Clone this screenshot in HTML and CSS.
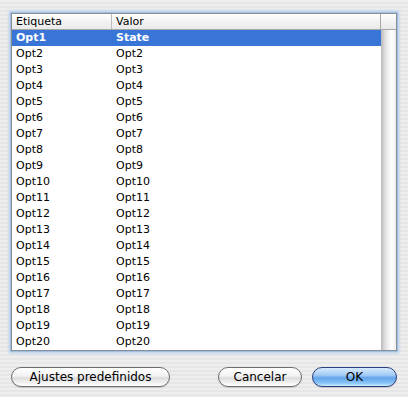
FILE: index.html
```html
<!DOCTYPE html>
<html>
<head>
  <title>Ajustes</title>
  <meta charset="utf-8"/>
  <link rel="stylesheet" href="styles.css">
</head>
<body>
  <div class="dialog">
    <div class="table-frame">
      <div class="table-header">
        <div class="th th-label">Etiqueta</div>
        <div class="th th-value">Valor</div>
        <div class="th th-corner"></div>
      </div>
      <div class="table-body">
        <div class="rows" id="rows"></div>
        <div class="scroller"></div>
      </div>
    </div>

    <div class="buttons">
      <button class="btn btn-wide">Ajustes predefinidos</button>
      <div class="spacer"></div>
      <button class="btn btn-cancel">Cancelar</button>
      <button class="btn btn-default">OK</button>
    </div>
  </div>

  <script>
    var rows = document.getElementById("rows")
    var html = ""
    for (let i = 1; i <= 20; i++) {
      var value = i == 1 ? "State" : "Opt" + i
      var cls = i == 1 ? "row selected" : "row"
      html += `<div class="${cls}"><div class="td td-label">Opt${i}</div><div class="td td-value">${value}</div></div>`
    }
    rows.innerHTML = html
  </script>
</body>
</html>
```

FILE: styles.css
```css
html, body {
	margin: 0;
	padding: 0;
	height: 100%;
}
body {
	font-family: "DejaVu Sans", Verdana, sans-serif;
	font-size: 11px;
	color: #000;
	background: repeating-linear-gradient(to bottom, #eeeeee 0px, #eeeeee 2px, #e6e6e6 2px, #e6e6e6 4px);
}
.dialog {
	padding: 13px 11px 0 11px;
	width: 386px;
}
.table-frame {
	border: 1px solid #8e8e8e;
	background: #fff;
	box-shadow: 0 0 0 1px #9fc0e6, 0 0 3px 2px #b3cdee;
}
.table-header {
	display: flex;
	height: 15px;
	border-bottom: 1px solid #a8a8a8;
	background: linear-gradient(to bottom, #ffffff, #f1f1f1 60%, #e9e9e9);
}
.th {
	line-height: 15px;
	padding-left: 4px;
	box-sizing: border-box;
	color: #000;
}
.th-label {
	width: 100px;
	border-right: 1px solid #bcbcbc;
}
.th-value {
	flex: 1;
	border-right: 1px solid #a8a8a8;
}
.th-corner {
	width: 15px;
}
.table-body {
	display: flex;
}
.rows {
	flex: 1;
}
.row {
	display: flex;
	height: 16px;
	line-height: 16px;
}
.row.selected {
	background: #3875d7;
	color: #fff;
	font-weight: bold;
}
.td {
	padding-left: 4px;
	box-sizing: border-box;
}
.td-label {
	width: 100px;
}
.td-value {
	flex: 1;
}
.scroller {
	width: 15px;
	background: linear-gradient(to right, #b9b9b9, #dcdcdc 25%, #f6f6f6 55%, #ffffff 75%, #ececec);
}
.buttons {
	display: flex;
	align-items: center;
	margin-top: 16px;
}
.spacer {
	flex: 1;
}
.btn {
	font-family: "DejaVu Sans", Verdana, sans-serif;
	font-size: 12px;
	height: 20px;
	line-height: 17px;
	padding: 0;
	border: 1px solid #6e6e6e;
	border-radius: 10px;
	color: #000;
	background: linear-gradient(to bottom, #ffffff 0%, #f2f2f2 45%, #dcdcdc 55%, #f4f4f4 85%, #ffffff 100%);
	box-shadow: 0 1px 1px rgba(0, 0, 0, 0.15);
}
.btn-wide {
	width: 159px;
}
.btn-cancel {
	width: 84px;
	margin-right: 10px;
}
.btn-default {
	width: 85px;
	border-color: #2a3f80;
	background: linear-gradient(to bottom, #d6eafd 0%, #a3cbf5 40%, #62a3ea 55%, #8cc6f7 85%, #cdefff 100%);
}
```
